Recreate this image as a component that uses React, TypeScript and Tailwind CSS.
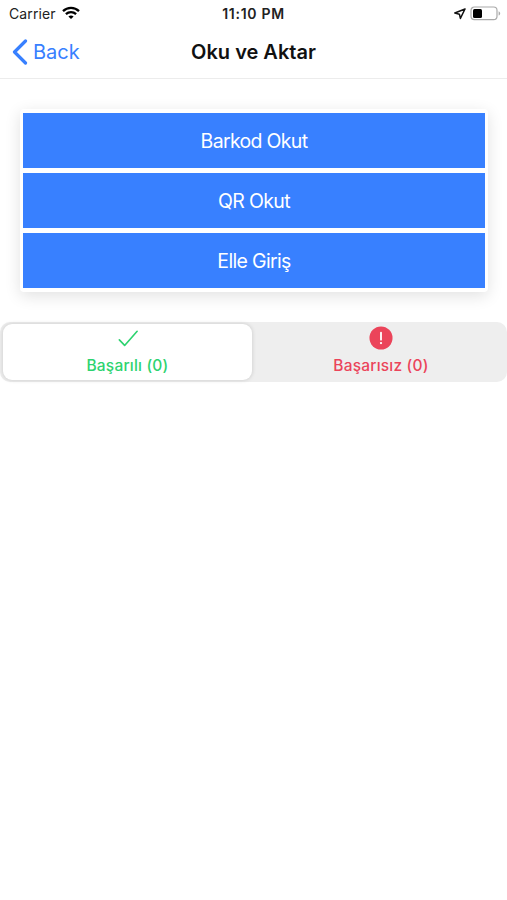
import React from 'react';

const actions = ['Barkod Okut', 'QR Okut', 'Elle Giriş'];

const StatusBar: React.FC = () => {
  return (
    <div className="grid grid-cols-3 items-center h-[27px] pl-[9px] pr-[6px]">
      <div className="flex items-center gap-[6px]">
        <span className="text-[14px] leading-none tracking-[0.12px] text-[#222]">Carrier</span>
        <svg className="-mt-[2px]" width="18" height="14" viewBox="0 0 18 14" fill="none" stroke="#000" strokeWidth="2.3">
          <path d="M1 5.1C5.5 0.8 12.5 0.8 17 5.1" />
          <path d="M3.9 8.2C6.8 5.5 11.2 5.5 14.1 8.2" />
          <path d="M6.4 10.5C7.9 9.1 10.1 9.1 11.6 10.5L9 13.1Z" fill="#000" stroke="none" />
        </svg>
      </div>
      <span className="-ml-[3px] pt-px text-center text-[14px] leading-none tracking-[0.7px] font-semibold text-[#222] whitespace-nowrap">
        11:10 PM
      </span>
      <div className="flex items-center justify-end gap-[4px]">
        <svg width="12" height="12" viewBox="0 0 12 12" fill="none" stroke="#111" strokeWidth="1.5" strokeLinejoin="round">
          <path d="M11 1L0.8 5L5.4 6.2L6.4 10.4Z" />
        </svg>
        <svg width="31" height="15" viewBox="0 0 31 15" fill="none">
          <rect x="1" y="1" width="26" height="12.6" rx="3.4" stroke="#aaa" strokeWidth="1.2" />
          <rect x="3" y="3" width="9" height="9" rx="1.5" fill="#000" />
          <path d="M28.6 5.2C30.7 6 30.7 8.8 28.6 9.6Z" fill="#aaa" />
        </svg>
      </div>
    </div>
  );
};

const NavBar: React.FC = () => {
  return (
    <div className="grid grid-cols-3 items-center h-[52px] pb-px border-b border-[#ececec]">
      <button className="flex items-center gap-[5px] pl-[12px] text-[#3880ff]">
        <svg width="16" height="26" viewBox="0 0 16 26" fill="none" stroke="currentColor" strokeWidth="3.2" strokeLinecap="round" strokeLinejoin="round">
          <path d="M13.5 2L2.5 13L13.5 24" />
        </svg>
        <span className="text-[20px] leading-none">Back</span>
      </button>
      <h1 className="text-center text-[20px] leading-none font-semibold text-[#111] whitespace-nowrap">
        Oku ve Aktar
      </h1>
    </div>
  );
};

export default function App() {
  return (
    <div className="min-h-screen bg-white font-['Inter',sans-serif]">
      <header>
        <StatusBar />
        <NavBar />
      </header>

      <main>
        <div className="mt-[30px] ml-[20px] mr-[19px] px-[3px] pt-[4px] pb-[4px] flex flex-col gap-[5px] rounded-[4px] bg-white shadow-[0_4px_16px_rgba(0,0,0,0.12)]">
          {actions.map((label) => (
            <button key={label} className="h-[55px] pt-[2px] bg-[#3880ff] text-white text-[19.5px] tracking-[-0.67px]">
              {label}
            </button>
          ))}
        </div>

        {/* Result segment */}
        <div className="mt-[30px] h-[60px] p-[2px] flex rounded-[10px] bg-[#eeeeee] text-[15.5px] tracking-[0.2px] font-medium">
          <button className="w-[249px] ml-px flex flex-col items-center rounded-[9px] bg-white text-[#2dd36f] shadow-[0_0_4px_rgba(0,0,0,0.16)]">
            <svg className="mt-[2px]" width="26" height="26" viewBox="0 0 26 26" fill="none" stroke="currentColor" strokeWidth="1.7" strokeLinecap="round" strokeLinejoin="round">
              <path d="M4 14.5L9.5 20.2L22.5 5.5" />
            </svg>
            <span className="mt-px leading-[28px]">Başarılı (0)</span>
          </button>
          <button className="flex-1 pl-[5px] flex flex-col items-center text-[#eb445a]">
            <svg className="mt-[2px]" width="26" height="26" viewBox="0 0 26 26">
              <circle cx="13" cy="12.5" r="12" fill="currentColor" />
              <path d="M13 7V14.2" stroke="#fff" strokeWidth="1.9" strokeLinecap="round" />
              <circle cx="13" cy="17.8" r="1.2" fill="#fff" />
            </svg>
            <span className="mt-px leading-[28px]">Başarısız (0)</span>
          </button>
        </div>
      </main>
    </div>
  );
}
